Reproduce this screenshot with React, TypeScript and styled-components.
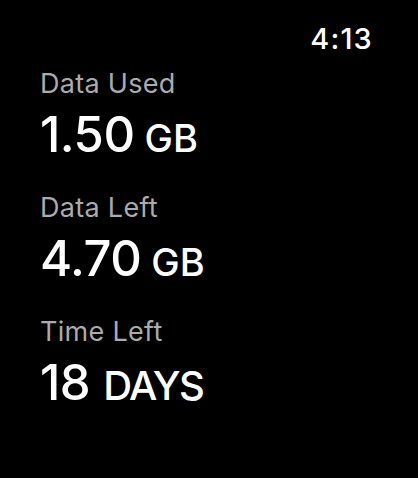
import React from "react";
import styled, { createGlobalStyle } from "styled-components";

const Global = createGlobalStyle`
  html, body {
    margin: 0;
    padding: 0;
    background: #000;
  }
  body {
    font-family: Inter, "Noto Sans", sans-serif;
    -webkit-font-smoothing: antialiased;
  }
`;

const Screen = styled.div`
  width: 418px;
  height: 478px;
  background: #000;
  box-sizing: border-box;
  padding: 21px 45px 0 40px;
  display: flex;
  flex-direction: column;
`;

const StatusBar = styled.header`
  display: flex;
  justify-content: flex-end;
  margin-bottom: 12px;
`;

const Clock = styled.div`
  color: #fff;
  font-size: 29px;
  line-height: 35px;
  font-weight: 500;
  letter-spacing: 1.2px;
`;

const List = styled.div`
  display: flex;
  flex-direction: column;
  gap: 29px;
`;

const Stat = styled.section`
  display: flex;
  flex-direction: column;
  gap: 7px;
`;

const Label = styled.div`
  color: #ababab;
  font-size: 27px;
  line-height: 32px;
  font-weight: 400;
  letter-spacing: 0.3px;
`;

const Value = styled.div`
  color: #fff;
  font-size: 49px;
  line-height: 56px;
  font-weight: 500;
  letter-spacing: -0.5px;
  white-space: nowrap;
`;

const Unit = styled.span<{ $size: number; $track: number; $gap: number }>`
  font-size: ${(p) => p.$size}px;
  line-height: 1;
  margin-left: ${(p) => p.$gap}px;
  letter-spacing: ${(p) => p.$track}px;
`;

const stats = [
  { label: "Data Used", value: "1.50", unit: "GB", size: 38, track: 0, gap: 10 },
  { label: "Data Left", value: "4.70", unit: "GB", size: 38, track: 0, gap: 10 },
  { label: "Time Left", value: "18", unit: "DAYS", size: 40, track: -1.6, gap: 13 },
];

export default function App() {
  return (
    <>
      <Global />
      <Screen>
        <StatusBar>
          <Clock>4:13</Clock>
        </StatusBar>
        <List>
          {stats.map((s) => (
            <Stat key={s.label}>
              <Label>{s.label}</Label>
              <Value>
                {s.value}
                <Unit $size={s.size} $track={s.track} $gap={s.gap}>
                  {s.unit}
                </Unit>
              </Value>
            </Stat>
          ))}
        </List>
      </Screen>
    </>
  );
}
